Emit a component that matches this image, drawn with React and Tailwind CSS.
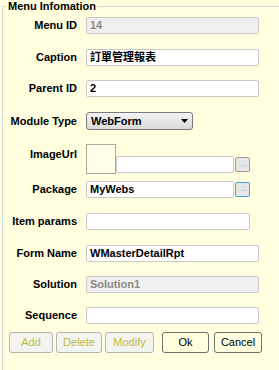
import { useState } from 'react'

// Menu information editor: labelled rows of inputs on a light yellow group box

const font = { fontFamily: '"Liberation Sans", "Noto Sans CJK TC", Arial, sans-serif' }

function Label({ children, top }) {
  return (
    <div className={`w-[77px] shrink-0 text-right text-[11px] font-bold text-black leading-none ${top ? 'self-start pt-[5px]' : ''}`}>
      {children}
    </div>
  )
}

function TextBox({ value, width = 'w-[173px]', disabled, dim }) {
  return (
    <div
      className={`${width} h-[17px] flex items-center px-[3px] border border-[#c9c9c9] rounded-[2px] text-[11px] font-bold leading-none ${
        disabled ? 'bg-[#efefef] text-[#8a8a8a]' : 'bg-white text-black'
      } ${dim ? 'font-bold' : ''}`}
    >
      {value}
    </div>
  )
}

function DotsButton({ active }) {
  return (
    <div
      className={`w-[15px] h-[15px] ml-[1px] flex items-center justify-center rounded-[2px] border bg-[#e6e6e6] ${
        active ? 'border-[#3ea3dc]' : 'border-[#9c9c9c]'
      }`}
    >
      <span className="text-[7px] leading-none text-[#8a8a8a] tracking-[0.5px] -mt-[2px]">...</span>
    </div>
  )
}

function Row({ label, children, className = '', top }) {
  return (
    <div className={`flex items-center gap-[9px] ${className}`}>
      <Label top={top}>{label}</Label>
      {children}
    </div>
  )
}

export default function App() {
  const [moduleType] = useState('WebForm')

  return (
    <div className="w-[279px] h-[370px] bg-[#ffffe0] relative overflow-hidden" style={font}>
      {/* group box frame */}
      <div className="absolute left-[2px] top-[6px] w-[300px] h-[400px] border-l border-t border-[#d6dbd9]" />
      <div className="absolute left-[7px] top-0 px-[1px] bg-[#ffffe0] text-[11px] font-bold leading-[13px] text-black">
        Menu Infomation
      </div>

      <div className="relative pt-[17px]">
        <Row label="Menu ID">
          <TextBox value="14" disabled />
        </Row>

        <Row label="Caption" className="mt-[15px]">
          <TextBox value="訂單管理報表" />
        </Row>

        <Row label="Parent ID" className="mt-[14px]">
          <TextBox value="2" />
        </Row>

        <Row label="Module Type" className="mt-[15px]">
          <div className="w-[107px] h-[18px] flex items-center justify-between pl-[4px] pr-[4px] border border-[#7a7a7a] rounded-[3px] bg-gradient-to-b from-[#f4f4f4] to-[#dadada] text-[11px] font-bold leading-none">
            <span>{moduleType}</span>
            <svg width="7" height="4" viewBox="0 0 7 4">
              <path d="M0 0h7L3.5 4z" fill="#000" />
            </svg>
          </div>
        </Row>

        <Row label="ImageUrl" className="mt-[14px]" top>
          <div className="flex items-center">
            <div className="w-[30px] h-[30px] border border-[#a9a9a0] bg-[#ffffe8]" />
            <div className="mt-[10px] flex items-center">
              <TextBox value="" width="w-[118px]" />
              <DotsButton />
            </div>
          </div>
        </Row>

        <Row label="Package" className="mt-[7px]">
          <div className="flex items-center">
            <TextBox value="MyWebs" width="w-[148px]" />
            <DotsButton active />
          </div>
        </Row>

        <Row label="Item params" className="mt-[15px]">
          <TextBox value="" width="w-[164px]" />
        </Row>

        <Row label="Form Name" className="mt-[15px]">
          <TextBox value="WMasterDetailRpt" />
        </Row>

        <Row label="Solution" className="mt-[14px]">
          <TextBox value="Solution1" disabled />
        </Row>

        <Row label="Sequence" className="mt-[14px]">
          <TextBox value="" />
        </Row>

        <div className="flex items-center mt-[8px] pl-[9px] text-[11px] leading-none">
          <button className="w-[44px] h-[21px] border border-[#b4b4b4] rounded-[3px] bg-[#f3f3f0] text-[#bdbd3a]">Add</button>
          <button className="w-[46px] h-[21px] ml-[3px] border border-[#b4b4b4] rounded-[3px] bg-[#f3f3f0] text-[#bdbd3a]">Delete</button>
          <button className="w-[49px] h-[21px] ml-[3px] border border-[#b4b4b4] rounded-[3px] bg-[#f3f3f0] text-[#bdbd3a]">Modify</button>
          <button className="w-[47px] h-[21px] ml-[8px] border border-[#707070] rounded-[3px] bg-[#ffffe0] text-black">Ok</button>
          <button className="w-[48px] h-[21px] ml-[5px] border border-[#707070] rounded-[3px] bg-[#ffffe0] text-black">Cancel</button>
        </div>
      </div>
    </div>
  )
}
